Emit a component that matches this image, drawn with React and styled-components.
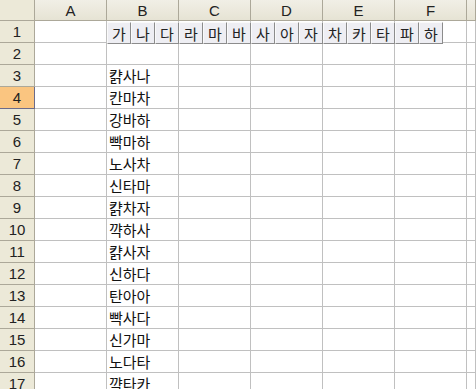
import styled, { createGlobalStyle } from "styled-components";

const columns = ["A", "B", "C", "D", "E", "F", ""];
const letters = ["가", "나", "다", "라", "마", "바", "사", "아", "자", "차", "카", "타", "파", "하"];
const words = {
  3: "캵사나",
  4: "칸마차",
  5: "강바하",
  6: "빡마하",
  7: "노사차",
  8: "신타마",
  9: "캵차자",
  10: "꺅하사",
  11: "캵사자",
  12: "신하다",
  13: "탄아아",
  14: "빡사다",
  15: "신가마",
  16: "노다타",
  17: "꺅타카",
};
const rows = Array.from({ length: 18 }, (_, i) => i + 1);

function App() {
  return (
    <>
      <GlobalStyle />
      <Sheet>
        <Grid>
          <Corner />
          {columns.map((c, i) => (
            <ColHead key={i}>{c}</ColHead>
          ))}
          {rows.map((r) => (
            <Row key={r} r={r} />
          ))}
        </Grid>
        <Toolbar>
          {letters.map((l) => (
            <KeyButton key={l}>{l}</KeyButton>
          ))}
        </Toolbar>
      </Sheet>
    </>
  );
}

function Row({ r }) {
  return (
    <>
      <RowHead $active={r === 4}>{r}</RowHead>
      {columns.map((c, i) => (
        <Cell key={i}>{c === "B" ? words[r] : ""}</Cell>
      ))}
    </>
  );
}

const GlobalStyle = createGlobalStyle`
  html, body {
    margin: 0;
    background: #fff;
    overflow: hidden;
  }
`;

const Sheet = styled.div`
  position: relative;
  width: 476px;
  height: 389px;
  overflow: hidden;
  font-family: "Liberation Sans", Arial, sans-serif;
`;

const Grid = styled.div`
  display: grid;
  grid-template-columns: 35px repeat(6, 72px) 1fr;
  grid-template-rows: 21px;
  grid-auto-rows: 22px;
`;

const Corner = styled.div`
  background: #ece9d8;
  border-right: 1px solid #aca899;
  border-bottom: 1px solid #aca899;
`;

const ColHead = styled.div`
  display: flex;
  align-items: center;
  justify-content: center;
  background: linear-gradient(#f1efe6, #e6e3d4);
  border-right: 1px solid #aca899;
  border-bottom: 1px solid #aca899;
  font-size: 15px;
  color: #222;
`;

const RowHead = styled.div`
  display: flex;
  align-items: center;
  justify-content: center;
  background: ${(p) => (p.$active ? "#fac580" : "#ece9d8")};
  border-right: 1px solid ${(p) => (p.$active ? "#6b6b8a" : "#aca899")};
  border-bottom: 1px solid ${(p) => (p.$active ? "#6b6b8a" : "#aca899")};
  font-size: 15px;
  color: #222;
`;

const Cell = styled.div`
  display: flex;
  align-items: center;
  padding-left: 2px;
  border-right: 1px solid #c0c0c0;
  border-bottom: 1px solid #c0c0c0;
  font-family: "Noto Sans CJK KR", sans-serif;
  font-size: 15px;
  color: #111;
  white-space: nowrap;
`;

const Toolbar = styled.div`
  position: absolute;
  left: 107px;
  top: 22px;
  display: flex;
`;

const KeyButton = styled.div`
  width: 24px;
  height: 22px;
  box-sizing: border-box;
  display: flex;
  align-items: center;
  justify-content: center;
  background: #eeeef3;
  border: 1px solid;
  border-color: #fafafa #8c8c8c #8c8c8c #fafafa;
  font-family: "Noto Sans CJK KR", sans-serif;
  font-size: 15px;
  color: #222;
`;

export default App;
